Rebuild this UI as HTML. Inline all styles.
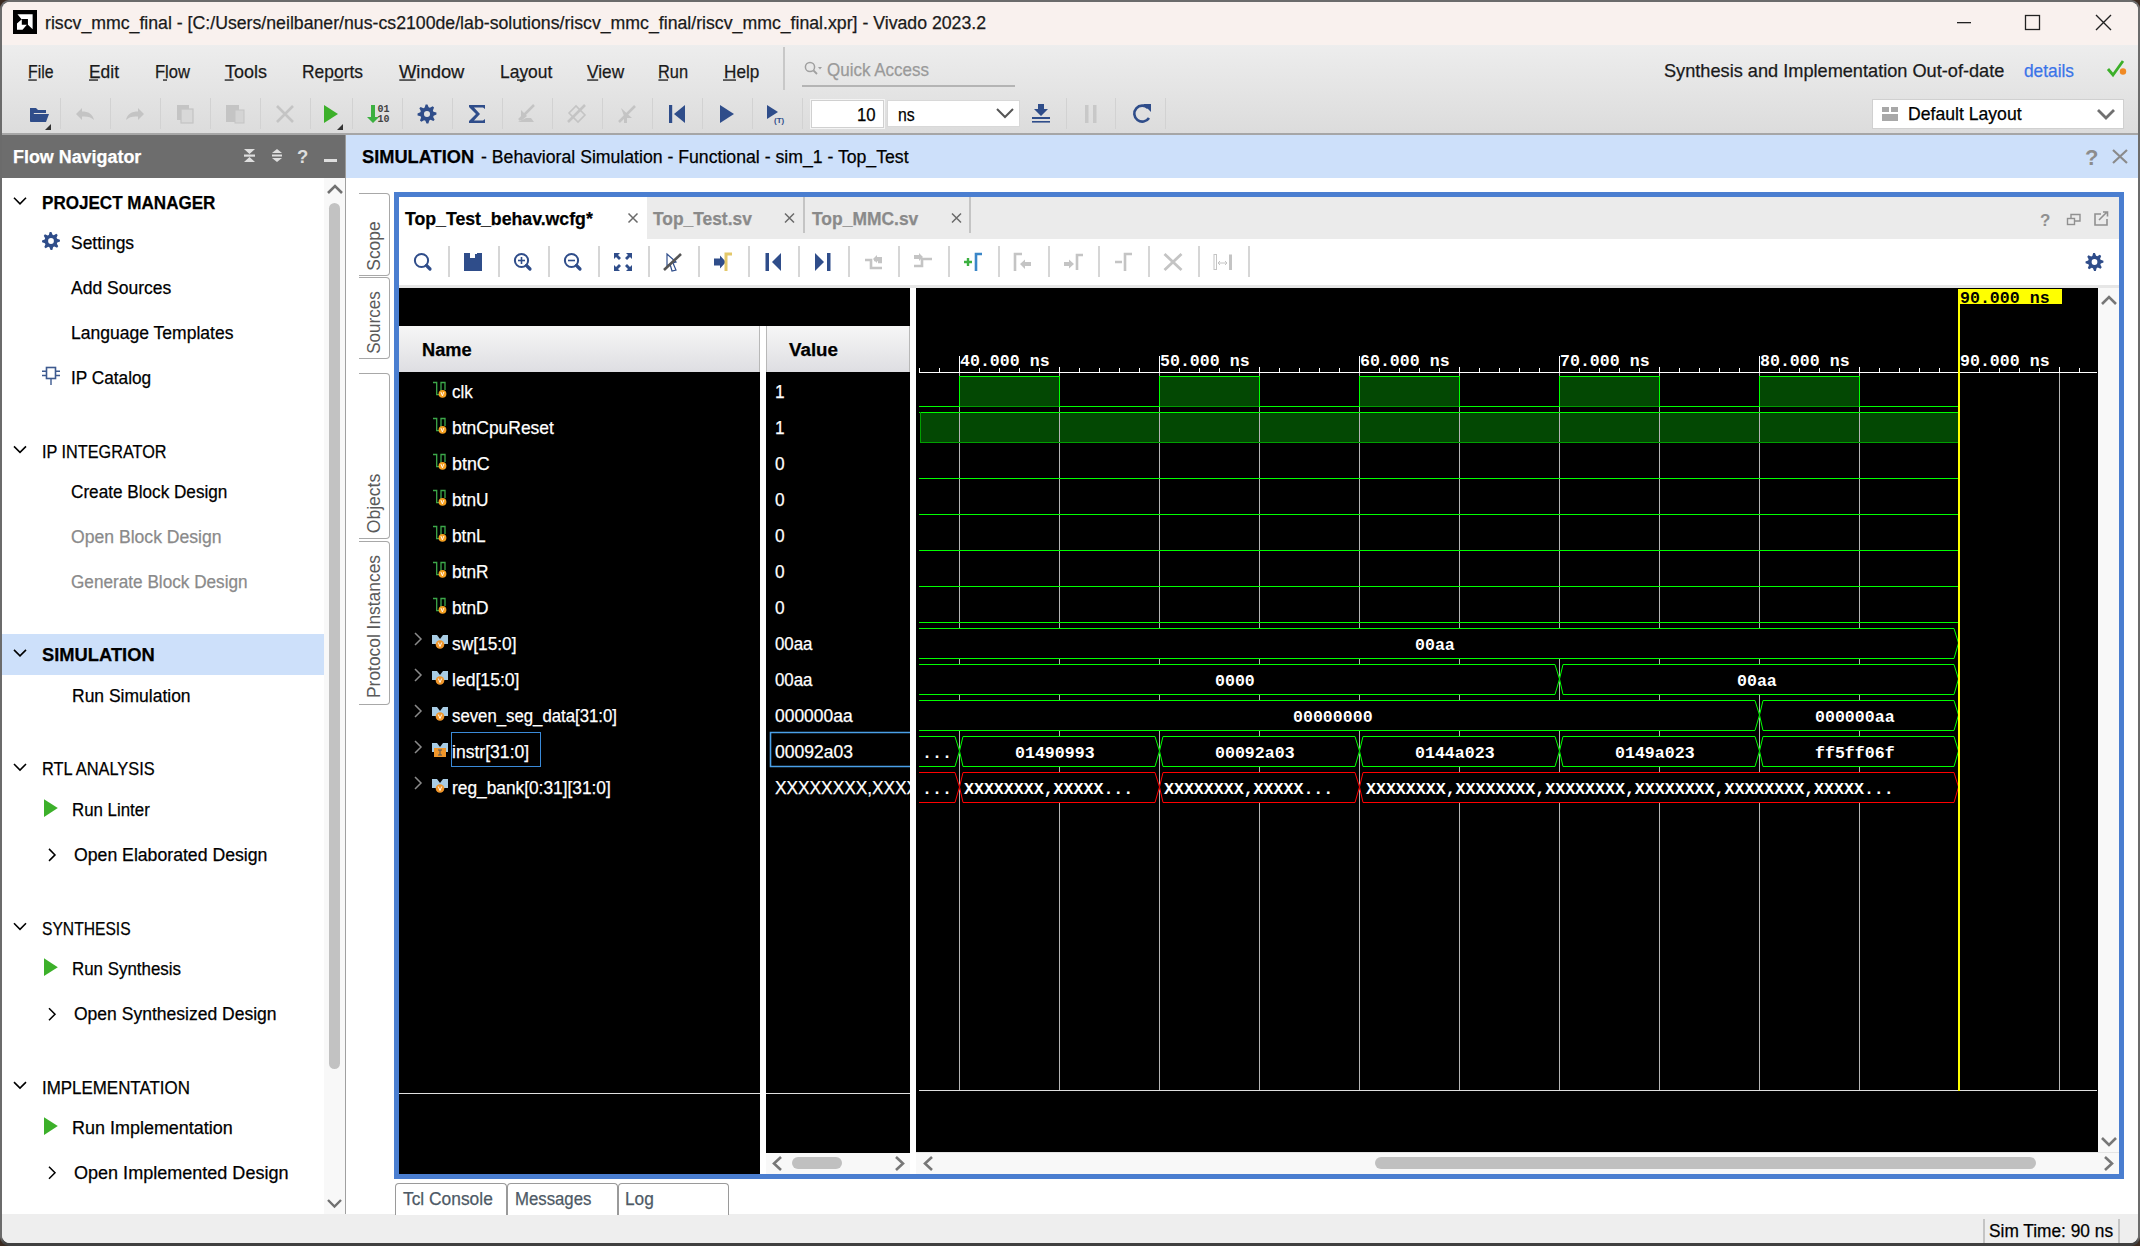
<!DOCTYPE html>
<html><head><meta charset="utf-8"><style>
*{margin:0;padding:0}
html,body{width:2140px;height:1246px;overflow:hidden;background:#3b2a20}
.b{position:absolute}
.t{position:absolute;white-space:pre;line-height:1;transform-origin:0 0;-webkit-text-stroke:0.25px currentColor}
svg{position:absolute}
.wt{font-family:'Liberation Mono';font-weight:700;font-size:16.6px;fill:#fff}
</style></head><body>
<div class="b" style="left:0px;top:0px;width:2140px;height:1246px;background:#3b2a20"></div>
<div class="b" style="left:0;top:0;width:2140px;height:1246px;background:linear-gradient(#6b6b6b 0,#6b6b6b 1238px,#404040 1243px);border-radius:9px 9px 9px 9px"></div>
<div class="b" style="left:2px;top:2px;width:2136px;height:1241px;background:#fff;border-radius:8px 8px 8px 8px;overflow:hidden"></div>
<div class="b" style="left:2px;top:2px;width:2136px;height:43px;background:#f9f1ee;border-radius:8px 8px 0 0"></div>
<div class="b" style="left:2px;top:45px;width:2136px;height:88px;background:linear-gradient(#ededed,#dcdcdc)"></div>
<div class="b" style="left:2px;top:133px;width:2136px;height:2px;background:#a6a6a6"></div>
<div class="b" style="left:2px;top:135px;width:343px;height:43px;background:#6d6d6d"></div>
<div class="b" style="left:345px;top:135px;width:1793px;height:43px;background:#cde0fa"></div>
<div class="b" style="left:345px;top:135px;width:1px;height:43px;background:#9a9a9a"></div>
<div class="b" style="left:324px;top:178px;width:21px;height:1036px;background:#f8f8f8"></div>
<div class="b" style="left:329px;top:203px;width:11px;height:866px;background:#c2c2c2;border-radius:6px"></div>
<div class="b" style="left:345px;top:178px;width:1px;height:1036px;background:#a0a0a0"></div>
<div class="b" style="left:2px;top:634px;width:322px;height:41px;background:#cde0fa"></div>
<div class="b" style="left:2px;top:1214px;width:2136px;height:29px;background:#eeeeee;border-radius:0 0 8px 8px"></div>
<div class="b" style="left:1983px;top:1219px;width:2px;height:24px;background:#c4c4c4"></div>
<div class="b" style="left:2118px;top:1219px;width:2px;height:24px;background:#c4c4c4"></div>
<div class="b" style="left:359px;top:193px;width:31px;height:83px;border:1px solid #a8a8a8;border-left:none;border-radius:0 4px 4px 0;box-sizing:border-box;background:#fff"></div>
<div class="b" style="left:359px;top:277px;width:31px;height:82px;border:1px solid #a8a8a8;border-left:none;border-radius:0 4px 4px 0;box-sizing:border-box;background:#fff"></div>
<div class="b" style="left:359px;top:373px;width:31px;height:166px;border:1px solid #a8a8a8;border-left:none;border-radius:0 4px 4px 0;box-sizing:border-box;background:#fff"></div>
<div class="b" style="left:359px;top:541px;width:31px;height:164px;border:1px solid #a8a8a8;border-left:none;border-radius:0 4px 4px 0;box-sizing:border-box;background:#fff"></div>
<div class="b" style="left:394px;top:192px;width:1730px;height:987px;background:#4a7ed0"></div>
<div class="b" style="left:399px;top:197px;width:1720px;height:977px;background:#fff"></div>
<div class="b" style="left:399px;top:197px;width:1720px;height:42px;background:#ebebeb"></div>
<div class="b" style="left:399px;top:197px;width:248px;height:42px;background:#fff"></div>
<div class="b" style="left:803px;top:197px;width:2px;height:36px;background:#c4c4c4"></div>
<div class="b" style="left:969px;top:197px;width:2px;height:36px;background:#c4c4c4"></div>
<div class="b" style="left:399px;top:285px;width:1720px;height:3px;background:#e6e6e6"></div>
<div class="b" style="left:399px;top:288px;width:511px;height:38px;background:#000"></div>
<div class="b" style="left:399px;top:326px;width:361px;height:46px;background:linear-gradient(#f6f6f6,#dedee2);border-right:1px solid #b8b8b8;box-sizing:border-box"></div>
<div class="b" style="left:766px;top:326px;width:144px;height:46px;background:linear-gradient(#f6f6f6,#dedee2);border-left:1px solid #b8b8b8;border-right:1px solid #b8b8b8;box-sizing:border-box"></div>
<div class="b" style="left:399px;top:372px;width:361px;height:802px;background:#000"></div>
<div class="b" style="left:766px;top:372px;width:144px;height:781px;background:#000"></div>
<div class="b" style="left:399px;top:1093px;width:361px;height:1px;background:#e0e0e0"></div>
<div class="b" style="left:766px;top:1093px;width:144px;height:1px;background:#e0e0e0"></div>
<div class="b" style="left:766px;top:1153px;width:144px;height:21px;background:#f8f8f8"></div>
<div class="b" style="left:792px;top:1157px;width:50px;height:12px;background:#c0c0c0;border-radius:6px"></div>
<div class="b" style="left:916px;top:288px;width:1182px;height:864px;background:#000"></div>
<div class="b" style="left:916px;top:1152px;width:1203px;height:22px;background:#f8f8f8;border-top:1px solid #e4e4e4;box-sizing:border-box"></div>
<div class="b" style="left:2098px;top:288px;width:21px;height:864px;background:#f8f8f8"></div>
<div class="b" style="left:1375px;top:1157px;width:661px;height:12px;background:#c0c0c0;border-radius:6px"></div>
<div class="b" style="left:395px;top:1183px;width:112px;height:32px;border:1px solid #9a9a9a;border-bottom:none;border-radius:4px 4px 0 0;box-sizing:border-box;background:#fff"></div>
<div class="b" style="left:507px;top:1183px;width:111px;height:32px;border:1px solid #9a9a9a;border-bottom:none;border-radius:4px 4px 0 0;box-sizing:border-box;background:#fff"></div>
<div class="b" style="left:618px;top:1183px;width:111px;height:32px;border:1px solid #9a9a9a;border-bottom:none;border-radius:4px 4px 0 0;box-sizing:border-box;background:#fff"></div>
<div class="b" style="left:811px;top:100px;width:73px;height:28px;background:#fff;border:1px solid #d0d0d0;box-sizing:border-box;box-shadow:0 0 0 1px #f4f4f4"></div>
<div class="b" style="left:887px;top:100px;width:133px;height:27px;background:#fff;border:1px solid #d8d8d8;box-sizing:border-box"></div>
<div class="b" style="left:1872px;top:99px;width:252px;height:30px;background:#fff;border:1px solid #d0d0d0;box-sizing:border-box"></div>
<div class="b" style="left:802px;top:85px;width:213px;height:2px;background:#b4b4b4"></div>
<div class="b" style="left:783px;top:47px;width:2px;height:43px;background:#c8c8c8"></div>
<svg style="left:916px;top:288px" width="1182" height="864" viewBox="916 288 1182 864"><rect x="919" y="372" width="1178" height="1" fill="#ffffff"/><rect x="919" y="368" width="1" height="5" fill="#ffffff"/><rect x="939" y="368" width="1" height="5" fill="#ffffff"/><rect x="959" y="356" width="1" height="17" fill="#ffffff"/><rect x="979" y="368" width="1" height="5" fill="#ffffff"/><rect x="999" y="368" width="1" height="5" fill="#ffffff"/><rect x="1019" y="368" width="1" height="5" fill="#ffffff"/><rect x="1039" y="368" width="1" height="5" fill="#ffffff"/><rect x="1059" y="367" width="1" height="6" fill="#ffffff"/><rect x="1079" y="368" width="1" height="5" fill="#ffffff"/><rect x="1099" y="368" width="1" height="5" fill="#ffffff"/><rect x="1119" y="368" width="1" height="5" fill="#ffffff"/><rect x="1139" y="368" width="1" height="5" fill="#ffffff"/><rect x="1159" y="356" width="1" height="17" fill="#ffffff"/><rect x="1179" y="368" width="1" height="5" fill="#ffffff"/><rect x="1199" y="368" width="1" height="5" fill="#ffffff"/><rect x="1219" y="368" width="1" height="5" fill="#ffffff"/><rect x="1239" y="368" width="1" height="5" fill="#ffffff"/><rect x="1259" y="367" width="1" height="6" fill="#ffffff"/><rect x="1279" y="368" width="1" height="5" fill="#ffffff"/><rect x="1299" y="368" width="1" height="5" fill="#ffffff"/><rect x="1319" y="368" width="1" height="5" fill="#ffffff"/><rect x="1339" y="368" width="1" height="5" fill="#ffffff"/><rect x="1359" y="356" width="1" height="17" fill="#ffffff"/><rect x="1379" y="368" width="1" height="5" fill="#ffffff"/><rect x="1399" y="368" width="1" height="5" fill="#ffffff"/><rect x="1419" y="368" width="1" height="5" fill="#ffffff"/><rect x="1439" y="368" width="1" height="5" fill="#ffffff"/><rect x="1459" y="367" width="1" height="6" fill="#ffffff"/><rect x="1479" y="368" width="1" height="5" fill="#ffffff"/><rect x="1499" y="368" width="1" height="5" fill="#ffffff"/><rect x="1519" y="368" width="1" height="5" fill="#ffffff"/><rect x="1539" y="368" width="1" height="5" fill="#ffffff"/><rect x="1559" y="356" width="1" height="17" fill="#ffffff"/><rect x="1579" y="368" width="1" height="5" fill="#ffffff"/><rect x="1599" y="368" width="1" height="5" fill="#ffffff"/><rect x="1619" y="368" width="1" height="5" fill="#ffffff"/><rect x="1639" y="368" width="1" height="5" fill="#ffffff"/><rect x="1659" y="367" width="1" height="6" fill="#ffffff"/><rect x="1679" y="368" width="1" height="5" fill="#ffffff"/><rect x="1699" y="368" width="1" height="5" fill="#ffffff"/><rect x="1719" y="368" width="1" height="5" fill="#ffffff"/><rect x="1739" y="368" width="1" height="5" fill="#ffffff"/><rect x="1759" y="356" width="1" height="17" fill="#ffffff"/><rect x="1779" y="368" width="1" height="5" fill="#ffffff"/><rect x="1799" y="368" width="1" height="5" fill="#ffffff"/><rect x="1819" y="368" width="1" height="5" fill="#ffffff"/><rect x="1839" y="368" width="1" height="5" fill="#ffffff"/><rect x="1859" y="367" width="1" height="6" fill="#ffffff"/><rect x="1879" y="368" width="1" height="5" fill="#ffffff"/><rect x="1899" y="368" width="1" height="5" fill="#ffffff"/><rect x="1919" y="368" width="1" height="5" fill="#ffffff"/><rect x="1939" y="368" width="1" height="5" fill="#ffffff"/><rect x="1959" y="356" width="1" height="17" fill="#ffffff"/><rect x="1979" y="368" width="1" height="5" fill="#ffffff"/><rect x="1999" y="368" width="1" height="5" fill="#ffffff"/><rect x="2019" y="368" width="1" height="5" fill="#ffffff"/><rect x="2039" y="368" width="1" height="5" fill="#ffffff"/><rect x="2059" y="367" width="1" height="6" fill="#ffffff"/><rect x="2079" y="368" width="1" height="5" fill="#ffffff"/><rect x="959.5" y="376.5" width="100" height="30" fill="#034803" stroke="#029a02" stroke-width="1"/><rect x="1159.5" y="376.5" width="100" height="30" fill="#034803" stroke="#029a02" stroke-width="1"/><rect x="1359.5" y="376.5" width="100" height="30" fill="#034803" stroke="#029a02" stroke-width="1"/><rect x="1559.5" y="376.5" width="100" height="30" fill="#034803" stroke="#029a02" stroke-width="1"/><rect x="1759.5" y="376.5" width="100" height="30" fill="#034803" stroke="#029a02" stroke-width="1"/><rect x="920" y="412" width="1038" height="30" fill="#034803"/><rect x="959" y="373" width="1" height="717" fill="#b4b4b4"/><rect x="1059" y="373" width="1" height="717" fill="#b4b4b4"/><rect x="1159" y="373" width="1" height="717" fill="#b4b4b4"/><rect x="1259" y="373" width="1" height="717" fill="#b4b4b4"/><rect x="1359" y="373" width="1" height="717" fill="#b4b4b4"/><rect x="1459" y="373" width="1" height="717" fill="#b4b4b4"/><rect x="1559" y="373" width="1" height="717" fill="#b4b4b4"/><rect x="1659" y="373" width="1" height="717" fill="#b4b4b4"/><rect x="1759" y="373" width="1" height="717" fill="#b4b4b4"/><rect x="1859" y="373" width="1" height="717" fill="#b4b4b4"/><rect x="2059" y="373" width="1" height="717" fill="#b4b4b4"/><rect x="919" y="1090" width="1178" height="1" fill="#e0e0e0"/><rect x="919" y="406" width="40" height="1" fill="#00ff00"/><rect x="959" y="376" width="1" height="31" fill="#00ff00"/><rect x="959" y="376" width="101" height="1" fill="#00ff00"/><rect x="1059" y="376" width="1" height="31" fill="#00ff00"/><rect x="1059" y="406" width="100" height="1" fill="#00ff00"/><rect x="1159" y="376" width="1" height="31" fill="#00ff00"/><rect x="1159" y="376" width="101" height="1" fill="#00ff00"/><rect x="1259" y="376" width="1" height="31" fill="#00ff00"/><rect x="1259" y="406" width="100" height="1" fill="#00ff00"/><rect x="1359" y="376" width="1" height="31" fill="#00ff00"/><rect x="1359" y="376" width="101" height="1" fill="#00ff00"/><rect x="1459" y="376" width="1" height="31" fill="#00ff00"/><rect x="1459" y="406" width="100" height="1" fill="#00ff00"/><rect x="1559" y="376" width="1" height="31" fill="#00ff00"/><rect x="1559" y="376" width="101" height="1" fill="#00ff00"/><rect x="1659" y="376" width="1" height="31" fill="#00ff00"/><rect x="1659" y="406" width="100" height="1" fill="#00ff00"/><rect x="1759" y="376" width="1" height="31" fill="#00ff00"/><rect x="1759" y="376" width="101" height="1" fill="#00ff00"/><rect x="1859" y="376" width="1" height="31" fill="#00ff00"/><rect x="1859" y="406" width="99" height="1" fill="#00ff00"/><rect x="919" y="412" width="1039" height="1" fill="#00ff00"/><rect x="920" y="412" width="1" height="30" fill="#00a000"/><rect x="920" y="442" width="1038" height="1" fill="#00a000"/><rect x="919" y="478" width="1039" height="1" fill="#00ff00"/><rect x="919" y="514" width="1039" height="1" fill="#00ff00"/><rect x="919" y="550" width="1039" height="1" fill="#00ff00"/><rect x="919" y="586" width="1039" height="1" fill="#00ff00"/><rect x="919" y="622" width="1039" height="1" fill="#00ff00"/><polygon points="919,628 1954,628 1958,643.0 1954,658 919,658 919,643.0" fill="#000"/><polyline points="919,628.5 1954,628.5 1958.5,643.0 1954,658.5 919,658.5" fill="none" stroke="#00ff00" stroke-width="1"/><text x="1415" y="649.5" class="wt">00aa</text><polygon points="919,664 1555,664 1559,679.0 1555,694 919,694 919,679.0" fill="#000"/><polyline points="919,664.5 1555,664.5 1559.5,679.0 1555,694.5 919,694.5" fill="none" stroke="#00ff00" stroke-width="1"/><polygon points="1563,664 1954,664 1958,679.0 1954,694 1563,694 1559,679.0" fill="#000"/><polyline points="1563,664.5 1954,664.5 1958.5,679.0 1954,694.5 1563,694.5" fill="none" stroke="#00ff00" stroke-width="1"/><polyline points="1563,664.5 1559.5,679.0 1563,694.5" fill="none" stroke="#00ff00" stroke-width="1"/><text x="1215" y="685.5" class="wt">0000</text><text x="1737" y="685.5" class="wt">00aa</text><polygon points="919,700 1755,700 1759,715.0 1755,730 919,730 919,715.0" fill="#000"/><polyline points="919,700.5 1755,700.5 1759.5,715.0 1755,730.5 919,730.5" fill="none" stroke="#00ff00" stroke-width="1"/><polygon points="1763,700 1954,700 1958,715.0 1954,730 1763,730 1759,715.0" fill="#000"/><polyline points="1763,700.5 1954,700.5 1958.5,715.0 1954,730.5 1763,730.5" fill="none" stroke="#00ff00" stroke-width="1"/><polyline points="1763,700.5 1759.5,715.0 1763,730.5" fill="none" stroke="#00ff00" stroke-width="1"/><text x="1293" y="721.5" class="wt">00000000</text><text x="1815" y="721.5" class="wt">000000aa</text><polygon points="919,736 955,736 959,751.0 955,766 919,766 919,751.0" fill="#000"/><polyline points="919,736.5 955,736.5 959.5,751.0 955,766.5 919,766.5" fill="none" stroke="#00ff00" stroke-width="1"/><polygon points="963,736 1155,736 1159,751.0 1155,766 963,766 959,751.0" fill="#000"/><polyline points="963,736.5 1155,736.5 1159.5,751.0 1155,766.5 963,766.5" fill="none" stroke="#00ff00" stroke-width="1"/><polyline points="963,736.5 959.5,751.0 963,766.5" fill="none" stroke="#00ff00" stroke-width="1"/><polygon points="1163,736 1355,736 1359,751.0 1355,766 1163,766 1159,751.0" fill="#000"/><polyline points="1163,736.5 1355,736.5 1359.5,751.0 1355,766.5 1163,766.5" fill="none" stroke="#00ff00" stroke-width="1"/><polyline points="1163,736.5 1159.5,751.0 1163,766.5" fill="none" stroke="#00ff00" stroke-width="1"/><polygon points="1363,736 1555,736 1559,751.0 1555,766 1363,766 1359,751.0" fill="#000"/><polyline points="1363,736.5 1555,736.5 1559.5,751.0 1555,766.5 1363,766.5" fill="none" stroke="#00ff00" stroke-width="1"/><polyline points="1363,736.5 1359.5,751.0 1363,766.5" fill="none" stroke="#00ff00" stroke-width="1"/><polygon points="1563,736 1755,736 1759,751.0 1755,766 1563,766 1559,751.0" fill="#000"/><polyline points="1563,736.5 1755,736.5 1759.5,751.0 1755,766.5 1563,766.5" fill="none" stroke="#00ff00" stroke-width="1"/><polyline points="1563,736.5 1559.5,751.0 1563,766.5" fill="none" stroke="#00ff00" stroke-width="1"/><polygon points="1763,736 1954,736 1958,751.0 1954,766 1763,766 1759,751.0" fill="#000"/><polyline points="1763,736.5 1954,736.5 1958.5,751.0 1954,766.5 1763,766.5" fill="none" stroke="#00ff00" stroke-width="1"/><polyline points="1763,736.5 1759.5,751.0 1763,766.5" fill="none" stroke="#00ff00" stroke-width="1"/><text x="922" y="757.5" class="wt">...</text><text x="1015" y="757.5" class="wt">01490993</text><text x="1215" y="757.5" class="wt">00092a03</text><text x="1415" y="757.5" class="wt">0144a023</text><text x="1615" y="757.5" class="wt">0149a023</text><text x="1815" y="757.5" class="wt">ff5ff06f</text><polygon points="919,772 955,772 959,787.0 955,802 919,802 919,787.0" fill="#000"/><polyline points="919,772.5 955,772.5 959.5,787.0 955,802.5 919,802.5" fill="none" stroke="#ff0000" stroke-width="1"/><polygon points="963,772 1155,772 1159,787.0 1155,802 963,802 959,787.0" fill="#000"/><polyline points="963,772.5 1155,772.5 1159.5,787.0 1155,802.5 963,802.5" fill="none" stroke="#ff0000" stroke-width="1"/><polyline points="963,772.5 959.5,787.0 963,802.5" fill="none" stroke="#ff0000" stroke-width="1"/><polygon points="1163,772 1355,772 1359,787.0 1355,802 1163,802 1159,787.0" fill="#000"/><polyline points="1163,772.5 1355,772.5 1359.5,787.0 1355,802.5 1163,802.5" fill="none" stroke="#ff0000" stroke-width="1"/><polyline points="1163,772.5 1159.5,787.0 1163,802.5" fill="none" stroke="#ff0000" stroke-width="1"/><polygon points="1363,772 1954,772 1958,787.0 1954,802 1363,802 1359,787.0" fill="#000"/><polyline points="1363,772.5 1954,772.5 1958.5,787.0 1954,802.5 1363,802.5" fill="none" stroke="#ff0000" stroke-width="1"/><polyline points="1363,772.5 1359.5,787.0 1363,802.5" fill="none" stroke="#ff0000" stroke-width="1"/><text x="922" y="793.5" class="wt">...</text><text x="964" y="793.5" class="wt">XXXXXXXX,XXXXX...</text><text x="1164" y="793.5" class="wt">XXXXXXXX,XXXXX...</text><text x="1366" y="793.5" class="wt">XXXXXXXX,XXXXXXXX,XXXXXXXX,XXXXXXXX,XXXXXXXX,XXXXX...</text><text x="960" y="365.5" class="wt">40.000 ns</text><text x="1160" y="365.5" class="wt">50.000 ns</text><text x="1360" y="365.5" class="wt">60.000 ns</text><text x="1560" y="365.5" class="wt">70.000 ns</text><text x="1760" y="365.5" class="wt">80.000 ns</text><text x="1960" y="365.5" class="wt">90.000 ns</text><rect x="1958" y="289" width="2" height="802" fill="#ffff00"/><rect x="1958" y="289" width="104" height="15" fill="#ffff00"/><text x="1960" y="302.5" class="wt" style="fill:#000">90.000 ns</text></svg><svg style="left:0;top:0" width="2140" height="1246" viewBox="0 0 2140 1246"><rect x="13" y="10" width="24" height="24" fill="#000"/><polygon points="17.46,14.22 32.63,14.22 32.63,29.15 27.94,24.82 27.94,19.04 21.32,19.04" fill="#fff"/><polygon points="16.98,23.61 21.8,19.28 21.8,24.82 26.86,24.82 22.52,29.63 16.98,29.63" fill="#fff"/><rect x="28.3" y="79.4" width="8.5" height="1.3" fill="#1a1a1a"/><rect x="89" y="79.4" width="9.0" height="1.3" fill="#1a1a1a"/><rect x="163" y="79.4" width="4.0" height="1.3" fill="#1a1a1a"/><rect x="224.7" y="79.4" width="8.9" height="1.3" fill="#1a1a1a"/><rect x="333.3" y="79.4" width="10.5" height="1.3" fill="#1a1a1a"/><rect x="399.3" y="79.4" width="16.5" height="1.3" fill="#1a1a1a"/><rect x="517" y="79.4" width="8.7" height="1.3" fill="#1a1a1a"/><rect x="587.2" y="79.4" width="11.0" height="1.3" fill="#1a1a1a"/><rect x="658.4" y="79.4" width="9.6" height="1.3" fill="#1a1a1a"/><rect x="723" y="79.4" width="13.0" height="1.3" fill="#1a1a1a"/><rect x="1957" y="22" width="14" height="1.3" fill="#222"/><rect x="2025.5" y="15.5" width="14" height="14" fill="none" stroke="#222" stroke-width="1.3"/><path d="M2096 15 L2111 30 M2111 15 L2096 30" stroke="#222" stroke-width="1.4"/><circle cx="810" cy="67" r="4.6" fill="none" stroke="#a0a0a0" stroke-width="1.5"/><path d="M813.5 70.5 L817 74" stroke="#a0a0a0" stroke-width="1.8"/><path d="M818 67 L822 67 L820 69.5Z" fill="#a0a0a0"/><path d="M2108 69 L2113 75 L2123 61" fill="none" stroke="#3cb02a" stroke-width="2.8"/><circle cx="2123" cy="71.5" r="3.2" fill="#f08a24"/><rect x="60" y="98" width="1" height="31" fill="#d2d2d2"/><rect x="110" y="98" width="1" height="31" fill="#d2d2d2"/><rect x="160" y="98" width="1" height="31" fill="#d2d2d2"/><rect x="210" y="98" width="1" height="31" fill="#d2d2d2"/><rect x="260" y="98" width="1" height="31" fill="#d2d2d2"/><rect x="310" y="98" width="1" height="31" fill="#d2d2d2"/><rect x="352" y="98" width="1" height="31" fill="#d2d2d2"/><rect x="402" y="98" width="1" height="31" fill="#d2d2d2"/><rect x="452" y="98" width="1" height="31" fill="#d2d2d2"/><rect x="502" y="98" width="1" height="31" fill="#d2d2d2"/><rect x="552" y="98" width="1" height="31" fill="#d2d2d2"/><rect x="602" y="98" width="1" height="31" fill="#d2d2d2"/><rect x="652" y="98" width="1" height="31" fill="#d2d2d2"/><rect x="702" y="98" width="1" height="31" fill="#d2d2d2"/><rect x="752" y="98" width="1" height="31" fill="#d2d2d2"/><rect x="802" y="98" width="1" height="31" fill="#d2d2d2"/><rect x="1066" y="98" width="1" height="31" fill="#d2d2d2"/><rect x="1115" y="98" width="1" height="31" fill="#d2d2d2"/><rect x="1165" y="98" width="1" height="31" fill="#d2d2d2"/><path d="M30 108 L36 108 L38 110 L46 110 L46 113 L34 113 L31 121 L30 121 Z" fill="#2f4d8a"/><path d="M33 114 L49 114 L46 122 L30 122 Z" fill="#2f4d8a"/><path d="M51 124 L51 130 L45 130 Z" fill="#333"/><path d="M76 114 L82 108 L82 111.5 C88 111.5 93 114 94 120 C91 117 87 116 82 116.5 L82 120 Z" fill="#c4c4c4"/><path d="M144 114 L138 108 L138 111.5 C132 111.5 127 114 126 120 C129 117 133 116 138 116.5 L138 120 Z" fill="#c4c4c4"/><rect x="177" y="105" width="12" height="15" fill="#c4c4c4"/><rect x="181" y="109" width="12" height="14" fill="#d8d8d8" stroke="#c4c4c4" stroke-width="1.2"/><rect x="226" y="105" width="13" height="17" fill="#c4c4c4"/><rect x="235" y="110" width="9" height="13" fill="#d4d4d4" stroke="#c4c4c4" stroke-width="1"/><path d="M277 106 L293 122 M293 106 L277 122" stroke="#c4c4c4" stroke-width="2.6"/><path d="M324 105 L338 114 L324 123 Z" fill="#3cb02a"/><path d="M343 124 L343 130 L337 130 Z" fill="#333"/><path d="M371 105 L375 105 L375 117 L379 117 L373 123 L367 117 L371 117 Z" fill="#3cb040"/><text x="377.5" y="112" style="font:bold 10px 'Liberation Mono';fill:#444">01</text><text x="377.5" y="122" style="font:bold 10px 'Liberation Mono';fill:#444">10</text><polygon points="436.40,112.61 436.49,114.47 433.64,115.66 433.18,116.92 434.63,119.66 433.38,121.04 430.52,119.87 429.30,120.44 428.39,123.40 426.53,123.49 425.34,120.64 424.08,120.18 421.34,121.63 419.96,120.38 421.13,117.52 420.56,116.30 417.60,115.39 417.51,113.53 420.36,112.34 420.82,111.08 419.37,108.34 420.62,106.96 423.48,108.13 424.70,107.56 425.61,104.60 427.47,104.51 428.66,107.36 429.92,107.82 432.66,106.37 434.04,107.62 432.87,110.48 433.44,111.70" fill="#2f4d8a"/><circle cx="427" cy="114" r="3.04" fill="#e2e2e2"/><path d="M469 105 L485 105 L485 109 L483 107.5 L474 107.5 L480 114 L474 120.5 L483 120.5 L485 119 L485 123 L469 123 L469 121 L476 114 L469 107 Z" fill="#2f4d8a"/><path d="M518 122 L534 122 L531 118 L526 118 Z" fill="#c4c4c4"/><path d="M519 120 L534 105" stroke="#c4c4c4" stroke-width="2.5"/><path d="M521 110 L527 116 L521 121Z" fill="#c4c4c4"/><path d="M569 113 L576 106 L585 115 L578 122 Z" fill="none" stroke="#c4c4c4" stroke-width="1.6"/><path d="M568 122 L585 105" stroke="#c4c4c4" stroke-width="2.5"/><path d="M619 122 L635 106" stroke="#c4c4c4" stroke-width="2.5"/><path d="M621 108 L632 118 L627 118 L627 123 L624 123 L624 116 Z" fill="#c4c4c4"/><rect x="669" y="105" width="3.2" height="18" fill="#2f4d8a"/><path d="M685 105 L674 114 L685 123 Z" fill="#2f4d8a"/><path d="M720 105 L734 114 L720 123 Z" fill="#2f4d8a"/><path d="M767 105 L778 112 L767 119 Z" fill="#2f4d8a"/><text x="774" y="123" style="font:bold 8px 'Liberation Sans';fill:#2f4d8a">(T)</text><path d="M997 109 L1005 117 L1013 109" fill="none" stroke="#555" stroke-width="2"/><path d="M1038 104 L1044 104 L1044 109 L1048 109 L1041 116 L1034 109 L1038 109 Z" fill="#2f4d8a"/><rect x="1032" y="117" width="18" height="2" fill="#2f4d8a"/><rect x="1032" y="121" width="18" height="1.6" fill="#2f4d8a"/><rect x="1085" y="105" width="3.5" height="18" fill="#c8c8c8"/><rect x="1093" y="105" width="3.5" height="18" fill="#c8c8c8"/><path d="M1148 108 A8 8 0 1 0 1149 118" fill="none" stroke="#2f4d8a" stroke-width="2.6"/><path d="M1143 104 L1151 104 L1151 112 Z" fill="#2f4d8a"/><rect x="1882" y="107" width="7" height="5" fill="#a8a8a8"/><rect x="1891" y="107" width="7" height="5" fill="#a8a8a8"/><rect x="1882" y="114" width="16" height="7" fill="#a8a8a8"/><path d="M2098 110 L2106 118 L2114 110" fill="none" stroke="#707070" stroke-width="2.8"/><path d="M244 149 L255 149 L249.5 154 Z M244 162 L255 162 L249.5 157 Z" fill="#dedede"/><rect x="244" y="154.5" width="11" height="2.2" fill="#dedede"/><path d="M272 153 L282 153 L277 149 Z M272 158 L282 158 L277 162 Z" fill="#dedede"/><rect x="272" y="154.5" width="10" height="2" fill="#dedede"/><text x="297" y="162.5" style="font:bold 18.5px 'Liberation Sans';fill:#dedede">?</text><rect x="324" y="159" width="13" height="3" fill="#dedede"/><text x="2085" y="164.5" style="font:bold 22px 'Liberation Sans';fill:#8c8c8c">?</text><path d="M2113 150 L2127 163 M2127 150 L2113 163" stroke="#8a8a8a" stroke-width="2.2"/><path d="M14 197.8 L20 203.8 L26 197.8" fill="none" stroke="#000" stroke-width="1.6"/><path d="M14 446.4 L20 452.4 L26 446.4" fill="none" stroke="#000" stroke-width="1.6"/><path d="M14 649.9 L20 655.9 L26 649.9" fill="none" stroke="#000" stroke-width="1.6"/><path d="M14 764.0 L20 770.0 L26 764.0" fill="none" stroke="#000" stroke-width="1.6"/><path d="M14 923.3 L20 929.3 L26 923.3" fill="none" stroke="#000" stroke-width="1.6"/><path d="M14 1082.1 L20 1088.1 L26 1082.1" fill="none" stroke="#000" stroke-width="1.6"/><polygon points="59.90,239.68 59.99,241.44 57.29,242.57 56.86,243.77 58.23,246.36 57.04,247.67 54.33,246.56 53.18,247.10 52.32,249.90 50.56,249.99 49.43,247.29 48.23,246.86 45.64,248.23 44.33,247.04 45.44,244.33 44.90,243.18 42.10,242.32 42.01,240.56 44.71,239.43 45.14,238.23 43.77,235.64 44.96,234.33 47.67,235.44 48.82,234.90 49.68,232.10 51.44,232.01 52.57,234.71 53.77,235.14 56.36,233.77 57.67,234.96 56.56,237.67 57.10,238.82" fill="#2f4d8a"/><circle cx="51" cy="241" r="2.88" fill="#fff"/><rect x="46.5" y="367.5" width="9" height="11" fill="none" stroke="#3d5a8f" stroke-width="1.6"/><path d="M42 371.2 L46 371.2 M42 375.5 L46 375.5 M56 371.2 L60 371.2 M56 375.5 L60 375.5 M51 379 L51 385" stroke="#3d5a8f" stroke-width="1.4"/><path d="M44 799.2 L57.8 808.1 L44 816.9000000000001 Z" fill="#3cb02a"/><path d="M44 958.3 L57.8 967.1999999999999 L44 976.0 Z" fill="#3cb02a"/><path d="M44 1117.2 L57.8 1126.1000000000001 L44 1134.9 Z" fill="#3cb02a"/><path d="M49 848.9 L55 854.9 L49 860.9" fill="none" stroke="#000" stroke-width="1.5"/><path d="M49 1008.2 L55 1014.2 L49 1020.2" fill="none" stroke="#000" stroke-width="1.5"/><path d="M49 1166.8 L55 1172.8 L49 1178.8" fill="none" stroke="#000" stroke-width="1.5"/><path d="M328 193 L335 186 L342 193" fill="none" stroke="#707070" stroke-width="2.6"/><path d="M328 1200 L334.5 1206.5 L341 1200" fill="none" stroke="#707070" stroke-width="2.4"/><text transform="translate(380,246) rotate(-90)" text-anchor="middle" textLength="49.5" lengthAdjust="spacingAndGlyphs" style="font:18px 'Liberation Sans';fill:#5a5a5a">Scope</text><text transform="translate(380,322.5) rotate(-90)" text-anchor="middle" textLength="62.5" lengthAdjust="spacingAndGlyphs" style="font:18px 'Liberation Sans';fill:#5a5a5a">Sources</text><text transform="translate(380,503.5) rotate(-90)" text-anchor="middle" textLength="59.5" lengthAdjust="spacingAndGlyphs" style="font:18px 'Liberation Sans';fill:#5a5a5a">Objects</text><text transform="translate(380,626.5) rotate(-90)" text-anchor="middle" textLength="143" lengthAdjust="spacingAndGlyphs" style="font:18px 'Liberation Sans';fill:#5a5a5a">Protocol Instances</text><path d="M628.5 213.5 L637.5 222.5 M637.5 213.5 L628.5 222.5" stroke="#6a6a6a" stroke-width="1.5"/><path d="M785 213.5 L794 222.5 M794 213.5 L785 222.5" stroke="#6a6a6a" stroke-width="1.5"/><path d="M952 213.5 L961 222.5 M961 213.5 L952 222.5" stroke="#6a6a6a" stroke-width="1.5"/><text x="2040" y="225.5" style="font:bold 17px 'Liberation Sans';fill:#909090">?</text><rect x="2067.5" y="218.5" width="7" height="6" fill="none" stroke="#909090" stroke-width="1.4"/><path d="M2071 218 L2071 214.5 L2080 214.5 L2080 221 L2075 221" fill="none" stroke="#909090" stroke-width="1.4"/><path d="M2101 214 L2095 214 L2095 225 L2107 225 L2107 219" fill="none" stroke="#909090" stroke-width="1.6"/><path d="M2099 220 L2107 212 M2103 212 L2107.5 212 L2107.5 216.5" fill="none" stroke="#909090" stroke-width="1.6"/><rect x="448" y="246" width="2" height="31" fill="#d6d6d6"/><rect x="498" y="246" width="2" height="31" fill="#d6d6d6"/><rect x="548" y="246" width="2" height="31" fill="#d6d6d6"/><rect x="598" y="246" width="2" height="31" fill="#d6d6d6"/><rect x="648" y="246" width="2" height="31" fill="#d6d6d6"/><rect x="698" y="246" width="2" height="31" fill="#d6d6d6"/><rect x="748" y="246" width="2" height="31" fill="#d6d6d6"/><rect x="798" y="246" width="2" height="31" fill="#d6d6d6"/><rect x="848" y="246" width="2" height="31" fill="#d6d6d6"/><rect x="898" y="246" width="2" height="31" fill="#d6d6d6"/><rect x="948" y="246" width="2" height="31" fill="#d6d6d6"/><rect x="998" y="246" width="2" height="31" fill="#d6d6d6"/><rect x="1048" y="246" width="2" height="31" fill="#d6d6d6"/><rect x="1098" y="246" width="2" height="31" fill="#d6d6d6"/><rect x="1148" y="246" width="2" height="31" fill="#d6d6d6"/><rect x="1198" y="246" width="2" height="31" fill="#d6d6d6"/><rect x="1248" y="246" width="2" height="31" fill="#d6d6d6"/><circle cx="421.5" cy="260.5" r="6.6" fill="none" stroke="#2f4d8a" stroke-width="2"/><path d="M426.5 265.5 L430 269" stroke="#2f4d8a" stroke-width="3.2" stroke-linecap="round"/><path d="M464 253 L470 253 L470 258 L475 258 L475 254 L477 254 L477 253 L482 253 L482 271 L464 271 Z" fill="#2f4d8a"/><circle cx="521.5" cy="260.5" r="6.6" fill="none" stroke="#2f4d8a" stroke-width="2"/><path d="M526.5 265.5 L530 269" stroke="#2f4d8a" stroke-width="3.2" stroke-linecap="round"/><path d="M518 260.5 L525 260.5" stroke="#2f4d8a" stroke-width="1.6"/><path d="M521.5 257 L521.5 264" stroke="#2f4d8a" stroke-width="1.6"/><circle cx="571.5" cy="260.5" r="6.6" fill="none" stroke="#2f4d8a" stroke-width="2"/><path d="M576.5 265.5 L580 269" stroke="#2f4d8a" stroke-width="3.2" stroke-linecap="round"/><path d="M568 260.5 L575 260.5" stroke="#2f4d8a" stroke-width="1.6"/><path d="M614 253 L620 253 L618 255 L621 258 L619 260 L616 257 L614 259 Z M632 253 L626 253 L628 255 L625 258 L627 260 L630 257 L632 259 Z M614 271 L620 271 L618 269 L621 266 L619 264 L616 267 L614 265 Z M632 271 L626 271 L628 269 L625 266 L627 264 L630 267 L632 265 Z" fill="#2f4d8a"/><path d="M667 254 L676 262 L673 263 L676 270 L672 271 L670 264 L667 266 Z" fill="none" stroke="#2f4d8a" stroke-width="1.2"/><path d="M664 270 L681 254" stroke="#555" stroke-width="2.6"/><path d="M714 258.5 L720 258.5 L720 255.5 L726 262 L720 268.5 L720 265.5 L714 265.5 Z" fill="#2f4d8a"/><path d="M726 271 L726 254 L732 254" fill="none" stroke="#e3c86a" stroke-width="3"/><rect x="765.5" y="253" width="3.5" height="18" fill="#2f4d8a"/><path d="M781 253 L772 262 L781 271 Z" fill="#2f4d8a"/><rect x="827" y="253" width="3.5" height="18" fill="#2f4d8a"/><path d="M815 253 L824 262 L815 271 Z" fill="#2f4d8a"/><path d="M865 260 L871 260 L871 268 L882 268 M878 260 L874 260 M878 262 L882 262" stroke="#c4c4c4" stroke-width="2.6" fill="none"/><path d="M873 259 L877 255 L877 257 L882 257 L882 261 L877 261 L877 263 Z" fill="#c4c4c4"/><path d="M914 266 L922 266 L922 259 L932 259" stroke="#c4c4c4" stroke-width="2.6" fill="none"/><path d="M914 255 L919 255 L919 253 L923 257 L919 261 L919 259 L914 259Z" fill="#c4c4c4"/><path d="M964 262 L972 262 M968 258 L968 266" stroke="#3cb040" stroke-width="2.4"/><path d="M976 271 L976 254 L982 254" fill="none" stroke="#3a86c8" stroke-width="2.6"/><path d="M1015 271 L1015 254 L1022 254" fill="none" stroke="#c4c4c4" stroke-width="2.6"/><path d="M1020 264 L1025 259.5 L1025 262 L1031 262 L1031 266 L1025 266 L1025 269 Z" fill="#c4c4c4"/><path d="M1077 270 L1077 255 L1083 255" fill="none" stroke="#c4c4c4" stroke-width="2.6"/><path d="M1064 262 L1069 262 L1069 259.5 L1074 264 L1069 268.5 L1069 266 L1064 266 Z" fill="#c4c4c4"/><path d="M1115 262 L1122 262 M1125 271 L1125 254 L1132 254" fill="none" stroke="#c4c4c4" stroke-width="2.6"/><path d="M1164.5 254 L1181.5 270 M1181.5 254 L1164.5 270" stroke="#c4c4c4" stroke-width="2.8"/><rect x="1214" y="254.5" width="2.5" height="15" fill="none" stroke="#c4c4c4" stroke-width="1"/><rect x="1229" y="254.5" width="3" height="15.5" fill="#c4c4c4"/><path d="M1218 263 L1227 263 M1220 261 L1218 263 L1220 265 M1225 261 L1227 263 L1225 265" stroke="#c4c4c4" stroke-width="1" fill="none"/><polygon points="2103.40,260.68 2103.49,262.44 2100.79,263.57 2100.36,264.77 2101.73,267.36 2100.54,268.67 2097.83,267.56 2096.68,268.10 2095.82,270.90 2094.06,270.99 2092.93,268.29 2091.73,267.86 2089.14,269.23 2087.83,268.04 2088.94,265.33 2088.40,264.18 2085.60,263.32 2085.51,261.56 2088.21,260.43 2088.64,259.23 2087.27,256.64 2088.46,255.33 2091.17,256.44 2092.32,255.90 2093.18,253.10 2094.94,253.01 2096.07,255.71 2097.27,256.14 2099.86,254.77 2101.17,255.96 2100.06,258.67 2100.60,259.82" fill="#2f4d8a"/><circle cx="2094.5" cy="262" r="2.88" fill="#fff"/><path d="M433 382.5 H436.7 V394.6 H439 M441 393 V382.5 H445 V390" fill="none" stroke="#3ca84a" stroke-width="1.3"/><circle cx="442.5" cy="393.8" r="3.9" fill="#f5a020"/><path d="M440.9 392 L442.4 395.8 L443.9 392" stroke="#fff" stroke-width="0.9" fill="none"/><path d="M433 418.5 H436.7 V430.6 H439 M441 429 V418.5 H445 V426" fill="none" stroke="#3ca84a" stroke-width="1.3"/><circle cx="442.5" cy="429.8" r="3.9" fill="#f5a020"/><path d="M440.9 428 L442.4 431.8 L443.9 428" stroke="#fff" stroke-width="0.9" fill="none"/><path d="M433 454.5 H436.7 V466.6 H439 M441 465 V454.5 H445 V462" fill="none" stroke="#3ca84a" stroke-width="1.3"/><circle cx="442.5" cy="465.8" r="3.9" fill="#f5a020"/><path d="M440.9 464 L442.4 467.8 L443.9 464" stroke="#fff" stroke-width="0.9" fill="none"/><path d="M433 490.5 H436.7 V502.6 H439 M441 501 V490.5 H445 V498" fill="none" stroke="#3ca84a" stroke-width="1.3"/><circle cx="442.5" cy="501.8" r="3.9" fill="#f5a020"/><path d="M440.9 500 L442.4 503.8 L443.9 500" stroke="#fff" stroke-width="0.9" fill="none"/><path d="M433 526.5 H436.7 V538.6 H439 M441 537 V526.5 H445 V534" fill="none" stroke="#3ca84a" stroke-width="1.3"/><circle cx="442.5" cy="537.8" r="3.9" fill="#f5a020"/><path d="M440.9 536 L442.4 539.8 L443.9 536" stroke="#fff" stroke-width="0.9" fill="none"/><path d="M433 562.5 H436.7 V574.6 H439 M441 573 V562.5 H445 V570" fill="none" stroke="#3ca84a" stroke-width="1.3"/><circle cx="442.5" cy="573.8" r="3.9" fill="#f5a020"/><path d="M440.9 572 L442.4 575.8 L443.9 572" stroke="#fff" stroke-width="0.9" fill="none"/><path d="M433 598.5 H436.7 V610.6 H439 M441 609 V598.5 H445 V606" fill="none" stroke="#3ca84a" stroke-width="1.3"/><circle cx="442.5" cy="609.8" r="3.9" fill="#f5a020"/><path d="M440.9 608 L442.4 611.8 L443.9 608" stroke="#fff" stroke-width="0.9" fill="none"/><path d="M415 633 L421 639 L415 645" fill="none" stroke="#8a8a8a" stroke-width="1.5"/><path d="M432 635 L437 635 L440 639 L443 635 L448 635 L448 644 L432 644 Z" fill="#a8cce4"/><circle cx="440" cy="644.5" r="4.3" fill="#f0962a"/><path d="M438.3 642.5 L440 646.5 L441.7 642.5" stroke="#fff" stroke-width="0.9" fill="none"/><path d="M415 669 L421 675 L415 681" fill="none" stroke="#8a8a8a" stroke-width="1.5"/><path d="M432 671 L437 671 L440 675 L443 671 L448 671 L448 680 L432 680 Z" fill="#a8cce4"/><circle cx="440" cy="680.5" r="4.3" fill="#f0962a"/><path d="M438.3 678.5 L440 682.5 L441.7 678.5" stroke="#fff" stroke-width="0.9" fill="none"/><path d="M415 705 L421 711 L415 717" fill="none" stroke="#8a8a8a" stroke-width="1.5"/><path d="M432 707 L437 707 L440 711 L443 707 L448 707 L448 716 L432 716 Z" fill="#a8cce4"/><circle cx="440" cy="716.5" r="4.3" fill="#f0962a"/><path d="M438.3 714.5 L440 718.5 L441.7 714.5" stroke="#fff" stroke-width="0.9" fill="none"/><path d="M415 741 L421 747 L415 753" fill="none" stroke="#8a8a8a" stroke-width="1.5"/><path d="M432 743 L437 743 L440 747 L443 743 L448 743 L448 752 L432 752 Z" fill="#a8cce4"/><rect x="434" y="748" width="12" height="9" fill="#f0962a"/><path d="M438 750 L442 750 M440 750 L440 755 M438 755 L442 755" stroke="#555" stroke-width="1"/><path d="M415 777 L421 783 L415 789" fill="none" stroke="#8a8a8a" stroke-width="1.5"/><path d="M432 779 L437 779 L440 783 L443 779 L448 779 L448 788 L432 788 Z" fill="#a8cce4"/><circle cx="440" cy="788.5" r="4.3" fill="#f0962a"/><path d="M438.3 786.5 L440 790.5 L441.7 786.5" stroke="#fff" stroke-width="0.9" fill="none"/><rect x="451.5" y="732.5" width="89" height="34" fill="none" stroke="#3a8ad8" stroke-width="1"/><path d="M910 732.5 H770.5 V766.5 H910" fill="none" stroke="#4aa0e8" stroke-width="1.6"/><path d="M781 1157 L774 1163.5 L781 1170" fill="none" stroke="#777" stroke-width="2.6"/><path d="M896 1157 L903 1163.5 L896 1170" fill="none" stroke="#777" stroke-width="2.6"/><path d="M932 1157 L925 1163.5 L932 1170" fill="none" stroke="#777" stroke-width="2.6"/><path d="M2105 1157 L2112 1163.5 L2105 1170" fill="none" stroke="#777" stroke-width="2.6"/><path d="M2102 304 L2109 297 L2116 304" fill="none" stroke="#777" stroke-width="2.6"/><path d="M2102 1138 L2109 1145 L2116 1138" fill="none" stroke="#777" stroke-width="2.6"/></svg>
<span class="t" style="left:45.2px;top:14.0px;font-size:18px;font-weight:400;color:#1a1a1a;font-family:'Liberation Sans';transform:scaleX(0.9833)">riscv_mmc_final - [C:/Users/neilbaner/nus-cs2100de/lab-solutions/riscv_mmc_final/riscv_mmc_final.xpr] - Vivado 2023.2</span>
<span class="t" style="left:28.2px;top:62.4px;font-size:19px;font-weight:400;color:#1a1a1a;font-family:'Liberation Sans';transform:scaleX(0.8327)">File</span>
<span class="t" style="left:88.7px;top:62.4px;font-size:19px;font-weight:400;color:#1a1a1a;font-family:'Liberation Sans';transform:scaleX(0.9160)">Edit</span>
<span class="t" style="left:154.7px;top:62.4px;font-size:19px;font-weight:400;color:#1a1a1a;font-family:'Liberation Sans';transform:scaleX(0.8723)">Flow</span>
<span class="t" style="left:224.8px;top:62.4px;font-size:19px;font-weight:400;color:#1a1a1a;font-family:'Liberation Sans';transform:scaleX(0.9446)">Tools</span>
<span class="t" style="left:302.1px;top:62.4px;font-size:19px;font-weight:400;color:#1a1a1a;font-family:'Liberation Sans';transform:scaleX(0.9169)">Reports</span>
<span class="t" style="left:398.9px;top:62.4px;font-size:19px;font-weight:400;color:#1a1a1a;font-family:'Liberation Sans';transform:scaleX(0.9678)">Window</span>
<span class="t" style="left:500.3px;top:62.4px;font-size:19px;font-weight:400;color:#1a1a1a;font-family:'Liberation Sans';transform:scaleX(0.9168)">Layout</span>
<span class="t" style="left:586.9px;top:62.4px;font-size:19px;font-weight:400;color:#1a1a1a;font-family:'Liberation Sans';transform:scaleX(0.9083)">View</span>
<span class="t" style="left:658.1px;top:62.4px;font-size:19px;font-weight:400;color:#1a1a1a;font-family:'Liberation Sans';transform:scaleX(0.8635)">Run</span>
<span class="t" style="left:723.5px;top:62.4px;font-size:19px;font-weight:400;color:#1a1a1a;font-family:'Liberation Sans';transform:scaleX(0.9033)">Help</span>
<span class="t" style="left:826.7px;top:60.5px;font-size:18.5px;font-weight:400;color:#9a9a9a;font-family:'Liberation Sans';transform:scaleX(0.9185)">Quick Access</span>
<span class="t" style="left:1663.6px;top:62.3px;font-size:18.5px;font-weight:400;color:#1a1a1a;font-family:'Liberation Sans';transform:scaleX(0.9822)">Synthesis and Implementation Out-of-date</span>
<span class="t" style="left:2024.1px;top:62.3px;font-size:18.5px;font-weight:400;color:#3a74e8;font-family:'Liberation Sans';transform:scaleX(0.9349)">details</span>
<span class="t" style="left:856.6px;top:106.2px;font-size:18.5px;font-weight:400;color:#000;font-family:'Liberation Sans';transform:scaleX(0.9039)">10</span>
<span class="t" style="left:898.1px;top:106.2px;font-size:18.5px;font-weight:400;color:#000;font-family:'Liberation Sans';transform:scaleX(0.8544)">ns</span>
<span class="t" style="left:1907.6px;top:105.4px;font-size:18.5px;font-weight:400;color:#000;font-family:'Liberation Sans';transform:scaleX(0.9521)">Default Layout</span>
<span class="t" style="left:13.2px;top:148.1px;font-size:18.7px;font-weight:700;color:#ffffff;font-family:'Liberation Sans';transform:scaleX(0.9578)">Flow Navigator</span>
<span class="t" style="left:361.5px;top:148.3px;font-size:18.7px;font-weight:700;color:#000;font-family:'Liberation Sans';transform:scaleX(0.9757)">SIMULATION</span>
<span class="t" style="left:480.6px;top:148.3px;font-size:18.7px;font-weight:400;color:#000;font-family:'Liberation Sans';transform:scaleX(0.9449)">- Behavioral Simulation - Functional - sim_1 - Top_Test</span>
<span class="t" style="left:42.2px;top:194.2px;font-size:18.7px;font-weight:700;color:#000;font-family:'Liberation Sans';transform:scaleX(0.9126)">PROJECT MANAGER</span>
<span class="t" style="left:71.1px;top:234.0px;font-size:18.7px;font-weight:400;color:#000;font-family:'Liberation Sans';transform:scaleX(0.9344)">Settings</span>
<span class="t" style="left:70.8px;top:278.7px;font-size:18.7px;font-weight:400;color:#000;font-family:'Liberation Sans';transform:scaleX(0.9364)">Add Sources</span>
<span class="t" style="left:70.8px;top:323.7px;font-size:18.7px;font-weight:400;color:#000;font-family:'Liberation Sans';transform:scaleX(0.9378)">Language Templates</span>
<span class="t" style="left:70.9px;top:368.7px;font-size:18.7px;font-weight:400;color:#000;font-family:'Liberation Sans';transform:scaleX(0.9225)">IP Catalog</span>
<span class="t" style="left:42.2px;top:442.8px;font-size:18.7px;font-weight:400;color:#000;font-family:'Liberation Sans';transform:scaleX(0.8688)">IP INTEGRATOR</span>
<span class="t" style="left:70.9px;top:483.0px;font-size:18.7px;font-weight:400;color:#000;font-family:'Liberation Sans';transform:scaleX(0.9181)">Create Block Design</span>
<span class="t" style="left:70.8px;top:528.1px;font-size:18.7px;font-weight:400;color:#8a8a8a;font-family:'Liberation Sans';transform:scaleX(0.9414)">Open Block Design</span>
<span class="t" style="left:70.9px;top:572.7px;font-size:18.7px;font-weight:400;color:#8a8a8a;font-family:'Liberation Sans';transform:scaleX(0.9190)">Generate Block Design</span>
<span class="t" style="left:41.6px;top:646.3px;font-size:18.7px;font-weight:700;color:#000;font-family:'Liberation Sans';transform:scaleX(0.9809)">SIMULATION</span>
<span class="t" style="left:71.6px;top:686.5px;font-size:18.7px;font-weight:400;color:#000;font-family:'Liberation Sans';transform:scaleX(0.9358)">Run Simulation</span>
<span class="t" style="left:41.7px;top:760.4px;font-size:18.7px;font-weight:400;color:#000;font-family:'Liberation Sans';transform:scaleX(0.8774)">RTL ANALYSIS</span>
<span class="t" style="left:71.6px;top:800.6px;font-size:18.7px;font-weight:400;color:#000;font-family:'Liberation Sans';transform:scaleX(0.9022)">Run Linter</span>
<span class="t" style="left:74.0px;top:845.8px;font-size:18.7px;font-weight:400;color:#000;font-family:'Liberation Sans';transform:scaleX(0.9449)">Open Elaborated Design</span>
<span class="t" style="left:41.7px;top:919.7px;font-size:18.7px;font-weight:400;color:#000;font-family:'Liberation Sans';transform:scaleX(0.8365)">SYNTHESIS</span>
<span class="t" style="left:71.6px;top:959.7px;font-size:18.7px;font-weight:400;color:#000;font-family:'Liberation Sans';transform:scaleX(0.9046)">Run Synthesis</span>
<span class="t" style="left:74.0px;top:1005.1px;font-size:18.7px;font-weight:400;color:#000;font-family:'Liberation Sans';transform:scaleX(0.9372)">Open Synthesized Design</span>
<span class="t" style="left:41.7px;top:1078.5px;font-size:18.7px;font-weight:400;color:#000;font-family:'Liberation Sans';transform:scaleX(0.9054)">IMPLEMENTATION</span>
<span class="t" style="left:71.5px;top:1118.6px;font-size:18.7px;font-weight:400;color:#000;font-family:'Liberation Sans';transform:scaleX(0.9614)">Run Implementation</span>
<span class="t" style="left:74.0px;top:1163.7px;font-size:18.7px;font-weight:400;color:#000;font-family:'Liberation Sans';transform:scaleX(0.9649)">Open Implemented Design</span>
<span class="t" style="left:405.3px;top:210.4px;font-size:18.7px;font-weight:700;color:#000;font-family:'Liberation Sans';transform:scaleX(0.9468)">Top_Test_behav.wcfg*</span>
<span class="t" style="left:652.7px;top:210.4px;font-size:18.7px;font-weight:700;color:#8a8a8a;font-family:'Liberation Sans';transform:scaleX(0.9297)">Top_Test.sv</span>
<span class="t" style="left:811.7px;top:210.4px;font-size:18.7px;font-weight:700;color:#8a8a8a;font-family:'Liberation Sans';transform:scaleX(0.9336)">Top_MMC.sv</span>
<span class="t" style="left:422.2px;top:340.8px;font-size:18.7px;font-weight:700;color:#000;font-family:'Liberation Sans';transform:scaleX(0.9743)">Name</span>
<span class="t" style="left:788.6px;top:340.9px;font-size:18.7px;font-weight:700;color:#000;font-family:'Liberation Sans';transform:scaleX(1.0035)">Value</span>
<span class="t" style="left:451.7px;top:383.0px;font-size:18.7px;font-weight:400;color:#fff;font-family:'Liberation Sans';transform:scaleX(0.9105)">clk</span>
<span class="t" style="left:451.7px;top:419.0px;font-size:18.7px;font-weight:400;color:#fff;font-family:'Liberation Sans';transform:scaleX(0.9342)">btnCpuReset</span>
<span class="t" style="left:451.6px;top:455.0px;font-size:18.7px;font-weight:400;color:#fff;font-family:'Liberation Sans';transform:scaleX(0.9548)">btnC</span>
<span class="t" style="left:451.7px;top:491.0px;font-size:18.7px;font-weight:400;color:#fff;font-family:'Liberation Sans';transform:scaleX(0.9248)">btnU</span>
<span class="t" style="left:451.7px;top:527.0px;font-size:18.7px;font-weight:400;color:#fff;font-family:'Liberation Sans';transform:scaleX(0.9248)">btnL</span>
<span class="t" style="left:451.7px;top:563.0px;font-size:18.7px;font-weight:400;color:#fff;font-family:'Liberation Sans';transform:scaleX(0.9248)">btnR</span>
<span class="t" style="left:451.7px;top:599.0px;font-size:18.7px;font-weight:400;color:#fff;font-family:'Liberation Sans';transform:scaleX(0.9248)">btnD</span>
<span class="t" style="left:451.7px;top:635.0px;font-size:18.7px;font-weight:400;color:#fff;font-family:'Liberation Sans';transform:scaleX(0.9280)">sw[15:0]</span>
<span class="t" style="left:451.6px;top:671.0px;font-size:18.7px;font-weight:400;color:#fff;font-family:'Liberation Sans';transform:scaleX(0.9414)">led[15:0]</span>
<span class="t" style="left:451.7px;top:707.0px;font-size:18.7px;font-weight:400;color:#fff;font-family:'Liberation Sans';transform:scaleX(0.8971)">seven_seg_data[31:0]</span>
<span class="t" style="left:451.6px;top:743.0px;font-size:18.7px;font-weight:400;color:#fff;font-family:'Liberation Sans';transform:scaleX(0.9407)">instr[31:0]</span>
<span class="t" style="left:451.7px;top:779.0px;font-size:18.7px;font-weight:400;color:#fff;font-family:'Liberation Sans';transform:scaleX(0.9263)">reg_bank[0:31][31:0]</span>
<span class="t" style="left:402.7px;top:1190.4px;font-size:18.7px;font-weight:400;color:#4e5a66;font-family:'Liberation Sans';transform:scaleX(0.9297)">Tcl Console</span>
<span class="t" style="left:514.7px;top:1190.4px;font-size:18.7px;font-weight:400;color:#4e5a66;font-family:'Liberation Sans';transform:scaleX(0.8970)">Messages</span>
<span class="t" style="left:625.3px;top:1190.4px;font-size:18.7px;font-weight:400;color:#4e5a66;font-family:'Liberation Sans';transform:scaleX(0.9234)">Log</span>
<span class="t" style="left:1989.1px;top:1221.9px;font-size:18.7px;font-weight:400;color:#000;font-family:'Liberation Sans';transform:scaleX(0.9262)">Sim Time: 90 ns</span>
<span class="t" style="left:774.7px;top:383.0px;font-size:18.7px;font-weight:400;color:#fff;font-family:'Liberation Sans';transform:scaleX(0.9248)">1</span>
<span class="t" style="left:774.7px;top:419.0px;font-size:18.7px;font-weight:400;color:#fff;font-family:'Liberation Sans';transform:scaleX(0.9248)">1</span>
<span class="t" style="left:774.7px;top:455.0px;font-size:18.7px;font-weight:400;color:#fff;font-family:'Liberation Sans';transform:scaleX(0.9248)">0</span>
<span class="t" style="left:774.7px;top:491.0px;font-size:18.7px;font-weight:400;color:#fff;font-family:'Liberation Sans';transform:scaleX(0.9248)">0</span>
<span class="t" style="left:774.7px;top:527.0px;font-size:18.7px;font-weight:400;color:#fff;font-family:'Liberation Sans';transform:scaleX(0.9248)">0</span>
<span class="t" style="left:774.7px;top:563.0px;font-size:18.7px;font-weight:400;color:#fff;font-family:'Liberation Sans';transform:scaleX(0.9248)">0</span>
<span class="t" style="left:774.7px;top:599.0px;font-size:18.7px;font-weight:400;color:#fff;font-family:'Liberation Sans';transform:scaleX(0.9248)">0</span>
<span class="t" style="left:774.7px;top:635.0px;font-size:18.7px;font-weight:400;color:#fff;font-family:'Liberation Sans';transform:scaleX(0.9019)">00aa</span>
<span class="t" style="left:774.7px;top:671.0px;font-size:18.7px;font-weight:400;color:#fff;font-family:'Liberation Sans';transform:scaleX(0.9019)">00aa</span>
<span class="t" style="left:774.7px;top:707.0px;font-size:18.7px;font-weight:400;color:#fff;font-family:'Liberation Sans';transform:scaleX(0.9332)">000000aa</span>
<span class="t" style="left:774.6px;top:743.0px;font-size:18.7px;font-weight:400;color:#fff;font-family:'Liberation Sans';transform:scaleX(0.9380)">00092a03</span>
<div class="b" style="left:766px;top:370px;width:144px;height:780px;overflow:hidden"><div class="b" style="left:-766px;top:-370px"><span class="t" style="left:774.7px;top:779.0px;font-size:18.7px;font-weight:400;color:#fff;font-family:'Liberation Sans';transform:scaleX(0.9248)">XXXXXXXX,XXXXX</span></div></div>
</body></html>
